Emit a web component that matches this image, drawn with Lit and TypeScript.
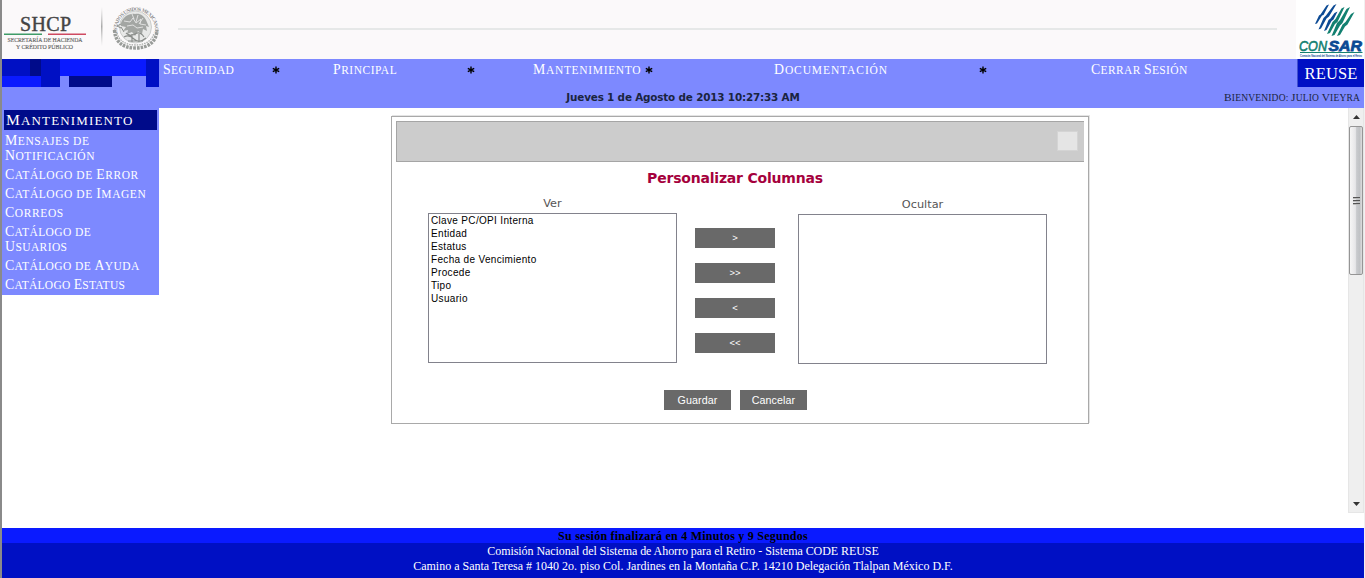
import { LitElement, html, css } from "lit";
import { customElement, property } from "lit/decorators.js";

const SERIF = css`"Liberation Serif", "Times New Roman", serif`;

/* Titling face: lowercase letters are drawn as slightly smaller capitals. */
const titling = css`
  .t { text-transform: uppercase; white-space: pre-line; }
  .cap { font-size: 1.2em; line-height: 0; }
`;
const caps = (text: string, tracking = 0) => html`<span class="t" style="letter-spacing:${tracking}px">${text
  .split(/(\p{Lu})/u)
  .filter((s) => s)
  .map((s) => (/^\p{Lu}$/u.test(s) ? html`<span class="cap">${s}</span>` : s))}</span>`;

@customElement("site-header")
class SiteHeader extends LitElement {
  static styles = css`
    :host { display: flex; justify-content: space-between; height: 59px; background: #fbf9fa; }
    svg { display: block; flex: none; }
    .rule { flex: 1; height: 2px; margin: 28px 19px 0 16px; background: #e6e8e8; }
    .consar { background: #fff; }
  `;
  render() {
    return html`
      <svg width="160" height="59" viewBox="2 0 160 59" font-family="Liberation Serif, serif">
        <defs>
          <linearGradient id="fade" x2="0" y2="1">
            <stop offset="0" stop-color="#bbb" stop-opacity="0" /><stop offset=".5" stop-color="#aaa" /><stop offset="1" stop-color="#bbb" stop-opacity="0" />
          </linearGradient>
        </defs>
        <text x="20" y="30.500" font-size="20" textLength="51" fill="#444" stroke="#444" stroke-width=".4">SHCP</text>
        <path d="M4 34.200H42" stroke="#3f9c68" stroke-width="1.500" /><path d="M48 34.200H86" stroke="#cf4a61" stroke-width="1.500" />
        <text x="7.500" y="42.300" font-size="6" textLength="75" lengthAdjust="spacingAndGlyphs" fill="#666" stroke="#666" stroke-width=".15">SECRETARÍA DE HACIENDA</text>
        <text x="16" y="48.800" font-size="6" textLength="57" lengthAdjust="spacingAndGlyphs" fill="#666" stroke="#666" stroke-width=".15">Y CRÉDITO PÚBLICO</text>
        <rect x="101" y="7" width="1.500" height="39" fill="url(#fade)" />
        <path id="arc" d="M117.500 34 A19 19 0 1 1 154.500 34" fill="none" />
        <text font-size="5" fill="#8a8a8a" font-weight="bold"><textPath href="#arc" textLength="66" startOffset="1">ESTADOS UNIDOS MEXICANOS</textPath></text>
        <circle cx="135.500" cy="27" r="16" fill="#e8e9e8" stroke="#c2c4c2" stroke-width=".8" />
        <path d="M114.500 30C115 42 123 48 135.500 48S156.500 42 157 30" fill="none" stroke="#999c99" stroke-width="3.400" stroke-dasharray="2.600 1" />
        <path d="M117 33C119 41 126 45 135.500 45S152 41 154 33" fill="none" stroke="#aaadaa" stroke-width="1.300" stroke-dasharray="1.500 1" />
        <path d="M121 23c2-6 8-10 14-9 5-1 9 2 11 6l3 7-3-1 1 5-4-2-1 5-4-3-3 5-3-4-5 2 1-4-5 1 3-4-5-1z" fill="#a3a6a3" />
        <path d="M124 21l6 1 3-4 3 5 5-4-1 5 6 1M127 26l6-1 4 3 6-1M132 14l2 5M138 15l-2 7M143 18l-4 6" stroke="#e6e7e6" fill="none" stroke-width=".9" />
        <path d="M126 33q4 4 9 1t9 3M124 37q5-3 10 2t12-1M128 41h15M132 34v8M139 34v8" fill="none" stroke="#8a8d8a" stroke-width="1.200" />
        <path d="M121 24l-4 2 4 2M121 27l3 5" fill="none" stroke="#8a8d8a" />
      </svg>
      <div class="rule"></div>
      <svg class="consar" width="68" height="59" viewBox="1296 0 68 59" font-family="Liberation Sans, sans-serif">
        <path d="M1315 24L1317 23.500 1322 15.500 1323.500 15 1329 4.500 1326.500 5.500 1320.500 14.500 1319 15.500zM1318.500 29.500L1321 28.500 1326.500 18.500 1329 16.500 1336.500 4 1333.500 5.500 1326 15.500 1323.500 18zM1324 31L1326.500 30 1331.500 21 1333.500 19.500 1337.500 11.500 1334.500 13 1330.500 18.500 1328.500 20z" fill="#0c4a94" />
        <path d="M1327 34L1330 33 1335 24 1337.500 22 1344.500 7 1341.500 8.500 1335.500 19 1332.500 22zM1331.500 36L1334.500 35 1340 25.500 1342.500 23 1350 7 1346.500 9 1340 20 1337 23zM1337 36L1340 35 1345 26.500 1347.500 24.500 1354.500 12 1351 14 1345.500 22 1342.500 24.500z" fill="#128070" />
        <text x="1299" y="50.500" font-size="15" font-style="italic" textLength="28" lengthAdjust="spacingAndGlyphs" fill="#128070" stroke="#128070" stroke-width=".6">CON</text>
        <text x="1328.500" y="50.500" font-size="15.500" font-style="italic" font-weight="bold" textLength="33.500" lengthAdjust="spacingAndGlyphs" fill="#0c4a94" stroke="#0c4a94" stroke-width=".8">SAR</text>
        <path d="M1300 52.500H1362.500" stroke="#168070" />
        <text x="1300" y="56.800" font-size="4" textLength="62" lengthAdjust="spacingAndGlyphs" fill="#0c4a94" stroke="#0c4a94" stroke-width=".1">Comisión Nacional del Sistema de Ahorro para el Retiro</text>
      </svg>
    `;
  }
}

@customElement("main-nav")
class MainNav extends LitElement {
  static styles = [titling, css`
    :host { display: grid; grid-template-columns: 157px 1fr 67px; grid-template-rows: 28px 21px; height: 49px; background: #7d89ff; font-family: ${SERIF}; }
    svg { display: block; }
    .menu { display: grid; grid-template-columns: 109px 61px 134px 66px 112px 129px 205px 112px auto; padding-left: 4px; line-height: 22px; color: #fff; font-size: 11.500px; white-space: nowrap; }
    .star { padding-top: 7px; }
    .brand { box-sizing: border-box; background: #0010c4; color: #fff; font-size: 16.500px; line-height: 29px; text-align: center; letter-spacing: .1px; border-left: 1px solid #4050d0; }
    .info { grid-column: 1 / -1; display: grid; grid-template-columns: 1fr auto 1fr; line-height: 21px; color: #1a2440; }
    .date { grid-column: 2; font: bold 10.400px/21px "DejaVu Sans", Verdana, sans-serif; letter-spacing: -.17px; }
    .user { text-align: right; padding-right: 4px; font-size: 9.500px; line-height: 22px; white-space: nowrap; }
  `];
  render() {
    const star = html`<span class="star"><svg width="8" height="8" viewBox="0 0 8 8"><path d="M4 .5v7M.8 2.300l6.400 3.400M7.200 2.300L.8 5.700" stroke="#000" stroke-width="1.400" /></svg></span>`;
    return html`
      <svg width="157" height="28" shape-rendering="crispEdges">
        <path d="M0 0h58v28H39V17H0zM144 0h13v28h-13z" fill="#0010c4" />
        <path d="M58 0h86v17H58zM0 17h39v11H0z" fill="#0a1aff" />
        <path d="M28 0h11v17H28zM67 17h43v11H67z" fill="#000b8a" />
      </svg>
      <nav class="menu">
        ${caps("Seguridad", 0.4)}${star}
        ${caps("Principal", 0.5)}${star}
        ${caps("Mantenimiento", 0.67)}${star}
        ${caps("Documentación", 0.9)}${star}
        ${caps("Cerrar Sesión", 0.35)}
      </nav>
      <div class="brand">REUSE</div>
      <div class="info"><span class="date">Jueves 1 de Agosto de 2013 10:27:33 AM</span><span class="user">${caps("Bienvenido: Julio Vieyra", 0.18)}</span></div>
    `;
  }
}

@customElement("side-menu")
class SideMenu extends LitElement {
  static styles = [titling, css`
    :host { display: block; width: 157px; height: 187px; box-sizing: border-box; padding: 2px; background: #7d89ff; color: #fff; font-family: ${SERIF}; }
    .title { height: 20px; line-height: 22px; background: #000b8a; padding-left: 2px; font-size: 13px; margin-bottom: 2px; }
    .item { padding: 2px 0 2px 1px; font-size: 11.500px; line-height: 15px; }
  `];
  render() {
    const items: [string, number][] = [
      ["Mensajes de\nNotificación", 0.55],
      ["Catálogo de Error", 0.55],
      ["Catálogo de Imagen", 0.55],
      ["Correos", 0.6],
      ["Catálogo de\nUsuarios", 0.4],
      ["Catálogo de Ayuda", 0.4],
      ["Catálogo Estatus", 0.25],
    ];
    return html`<div class="title">${caps("Mantenimiento", 1.15)}</div>${items.map(([text, tracking]) => html`<div class="item">${caps(text, tracking)}</div>`)}`;
  }
}

@customElement("column-list")
class ColumnList extends LitElement {
  @property() label = "";
  @property({ attribute: false }) items: string[] = [];
  static styles = css`
    :host { display: block; width: 249px; }
    .label { height: 18px; text-align: center; color: #555; font: 11.300px/17px "DejaVu Sans", Verdana, sans-serif; }
    .box { height: 150px; box-sizing: border-box; border: 1px solid #82828c; padding: 0 2px; font: 10px/13px "Liberation Sans", Arial, sans-serif; letter-spacing: .33px; color: #000; }
  `;
  render() {
    return html`<div class="label">${this.label}</div><div class="box">${this.items.map((i) => html`<div>${i}</div>`)}</div>`;
  }
}

@customElement("columns-dialog")
class ColumnsDialog extends LitElement {
  static styles = css`
    :host { display: block; box-sizing: border-box; width: 698px; height: 308px; border: 1px solid #a9a9a9; padding: 4px; box-shadow: 1px -1px #e4e4e4; }
    .bar { display: flex; justify-content: flex-end; box-sizing: border-box; width: 688px; height: 41px; background: #ccc; border: 1px solid #a5a5a5; border-right: 0; padding: 9px 6px 0 0; }
    .close { width: 19px; height: 18px; background: #e5e5e5; border: 1px solid #d4d4d4; }
    h1 { margin: 6px 0 0 -10px; height: 20px; text-align: center; color: #a5003c; font: bold 14px/20px "DejaVu Sans", Verdana, sans-serif; letter-spacing: -.2px; }
    .body { display: flex; padding-left: 32px; margin-top: 7px; }
    .moves { display: flex; flex-direction: column; gap: 15px; width: 80px; margin: 33px 23px 0 18px; }
    .hidden { margin-top: 1px; }
    button { height: 20px; padding: 0; border: 0; border-radius: 0; background: #696969; color: #fff; font: 10.700px/20px "Liberation Sans", Arial, sans-serif; }
    .moves button { font-size: 9.500px; }
    .actions { display: flex; gap: 9px; padding-left: 268px; margin-top: 26px; }
    .actions button { width: 67px; letter-spacing: .1px; }
  `;
  render() {
    const visible = ["Clave PC/OPI Interna", "Entidad", "Estatus", "Fecha de Vencimiento", "Procede", "Tipo", "Usuario"];
    return html`
      <div class="bar"><div class="close"></div></div>
      <h1>Personalizar Columnas</h1>
      <div class="body">
        <column-list label="Ver" .items=${visible}></column-list>
        <div class="moves">${[">", ">>", "<", "<<"].map((s) => html`<button>${s}</button>`)}</div>
        <column-list class="hidden" label="Ocultar"></column-list>
      </div>
      <div class="actions"><button>Guardar</button><button>Cancelar</button></div>
    `;
  }
}

@customElement("scroll-rail")
class ScrollRail extends LitElement {
  static styles = css`
    :host { display: flex; flex-direction: column; align-items: center; box-sizing: border-box; width: 16px; height: 405px; background: #efefef; border: 1px solid #e6e6e6; border-top: 0; }
    svg { display: block; flex: none; }
    .up { height: 18px; padding-top: 7px; box-sizing: border-box; }
    .thumb { display: flex; flex-direction: column; align-items: center; justify-content: center; gap: 1px; box-sizing: border-box; width: 14px; height: 149px; border: 1px solid #959595; border-radius: 2px; background: linear-gradient(90deg, #f6f6f6, #e6e6e8 45%, #c8cacd 55%, #c0c2c5 80%, #dedede); }
    .grip { width: 7px; height: 1px; background: #555; border-bottom: 1px solid #bbb; }
    .down { margin-top: auto; padding-bottom: 6px; }
  `;
  render() {
    return html`
      <div class="up"><svg width="7" height="4"><path d="M0 4L3.500 0L7 4z" fill="#333" /></svg></div>
      <div class="thumb"><div class="grip"></div><div class="grip"></div><div class="grip"></div></div>
      <div class="down"><svg width="7" height="4"><path d="M0 0L3.500 4L7 0z" fill="#333" /></svg></div>
    `;
  }
}

@customElement("site-footer")
class SiteFooter extends LitElement {
  static styles = css`
    :host { display: block; height: 50px; background: #0010c4; color: #fff; text-align: center; font: 12px/15px ${SERIF}; }
    .timer { height: 15px; line-height: 16px; background: #0a1aff; color: #000; font-weight: bold; letter-spacing: .24px; }
    .name { padding-top: 1px; letter-spacing: -.06px; }
  `;
  render() {
    return html`
      <div class="timer">Su sesión finalizará en 4 Minutos y 9 Segundos</div>
      <div class="name">Comisión Nacional del Sistema de Ahorro para el Retiro - Sistema CODE REUSE</div>
      <div>Camino a Santa Teresa # 1040 2o. piso Col. Jardines en la Montaña C.P. 14210 Delegación Tlalpan México D.F.</div>
    `;
  }
}

@customElement("app-root")
class AppRoot extends LitElement {
  static styles = css`
    :host { display: flex; flex-direction: column; box-sizing: border-box; width: 1365px; height: 578px; overflow: hidden; background: #fff; border-left: 2px solid #8a8a8a; border-right: 1px solid #f0f0f0; }
    .content { display: flex; height: 420px; }
    .dialog { margin: 8px 0 0 232px; flex: none; }
    .rail { margin-left: auto; }
  `;
  render() {
    return html`
      <site-header></site-header>
      <main-nav></main-nav>
      <div class="content">
        <side-menu></side-menu>
        <columns-dialog class="dialog"></columns-dialog>
        <scroll-rail class="rail"></scroll-rail>
      </div>
      <site-footer></site-footer>
    `;
  }
}
